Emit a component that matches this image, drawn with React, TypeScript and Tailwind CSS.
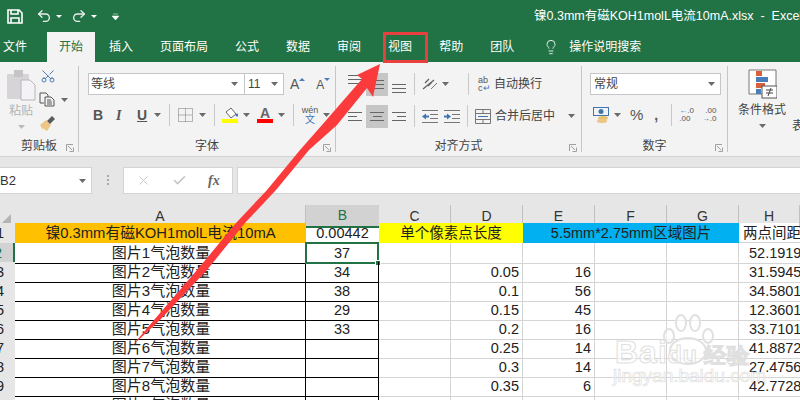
import React from 'react';
import { Lightbulb, Redo2, Scissors, Undo2, X, Check } from 'lucide-react';

const tabs = ['插入', '页面布局', '公式', '数据', '审阅', '视图', '帮助', '团队'];

const rows = [
  { n: 2, name: '图片1气泡数量', b: '37', d: '', e: '', h: '52.1919' },
  { n: 3, name: '图片2气泡数量', b: '34', d: '0.05', e: '16', h: '31.5945' },
  { n: 4, name: '图片3气泡数量', b: '38', d: '0.1', e: '56', h: '34.5801' },
  { n: 5, name: '图片4气泡数量', b: '29', d: '0.15', e: '45', h: '12.3601' },
  { n: 6, name: '图片5气泡数量', b: '33', d: '0.2', e: '16', h: '33.7101' },
  { n: 7, name: '图片6气泡数量', b: '', d: '0.25', e: '14', h: '41.8872' },
  { n: 8, name: '图片7气泡数量', b: '', d: '0.3', e: '14', h: '27.4756' },
  { n: 9, name: '图片8气泡数量', b: '', d: '0.35', e: '6', h: '42.7728' },
  { n: 10, name: '图片9气泡数量', b: '', d: '', e: '', h: '' },
];

const cjk = "font-['Liberation_Sans','Noto_Sans_CJK_SC',sans-serif]";
const gridCols = 'grid grid-cols-[15px_291px_73px_72px_72px_72px_72px_72px_61px]';

const Caret = ({ className = '' }: { className?: string }) => (
  <svg width="7" height="4" viewBox="0 0 7 4" className={className}>
    <path d="M0 0h7L3.5 4z" fill="#6a6a6a" />
  </svg>
);

const Sep = ({ className = '' }: { className?: string }) => (
  <div className={`w-px h-[22px] bg-[#c8c8c8] ${className}`} />
);

const Launcher = () => (
  <svg width="8" height="8" viewBox="0 0 8 8">
    <path d="M.5 7V.5H7M2 2l4 4M3.5 7.5h4v-4" fill="none" stroke="#8a8a8a" strokeWidth=".8" />
  </svg>
);

// 对齐图标: 三条横线
const Lines = ({ widths, align }: { widths: number[]; align: string }) => (
  <div className={`flex flex-col gap-[3px] w-[14px] ${align}`}>
    {widths.map((w, i) => (
      <div key={i} className="h-px bg-[#666]" style={{ width: w }} />
    ))}
  </div>
);

const Group = ({ w, label, children }: { w: string; label: string; children: React.ReactNode }) => (
  <div className={`${w} shrink-0 h-[86px] flex flex-col border-r border-[#c6c6c6] mt-[4px] relative`}>
    <div className="flex-1">{children}</div>
    <div className="h-[17px] flex items-center justify-center text-[12px] text-[#444] pt-[4px]">{label}</div>
    <div className="absolute right-[4px] bottom-[0px] flex">
      <Launcher />
    </div>
  </div>
);

const App = () => {
  return (
    <div className={`w-[800px] h-[400px] overflow-hidden relative bg-white ${cjk}`}>
      {/* Title bar */}
      <div className="h-[32px] bg-[#217346] flex items-center text-white overflow-hidden">
        <svg width="16" height="15" viewBox="0 0 16 15" className="ml-[7px] shrink-0">
          <path d="M1 1h11l3 3v10H1zM4 1v4h7V1M4 14V9h8v5" fill="none" stroke="#fff" strokeWidth="1.6" />
        </svg>
        <Undo2 size={16} strokeWidth={2} className="ml-[13px] shrink-0 text-[#e8efea]" />
        <svg width="6" height="3" viewBox="0 0 6 3" className="ml-[4px] shrink-0"><path d="M0 0h6L3 3z" fill="#fff" /></svg>
        <Redo2 size={16} strokeWidth={2} className="ml-[9px] shrink-0 text-[#e8efea]" />
        <svg width="6" height="3" viewBox="0 0 6 3" className="ml-[4px] shrink-0"><path d="M0 0h6L3 3z" fill="#fff" /></svg>
        <svg width="7" height="7" viewBox="0 0 7 7" className="ml-[15px] shrink-0"><path d="M1 1h5M0 3h7L3.5 7z" fill="#fff" stroke="#fff" strokeWidth=".5" /></svg>
        <div className="ml-[415px] shrink-0 text-[12.5px] whitespace-nowrap">镍0.3mm有磁KOH1molL电流10mA.xlsx&nbsp; -&nbsp; Excel</div>
      </div>

      {/* Tabs */}
      <div className="h-[30px] bg-[#217346] flex items-center gap-[27px] pl-[3px] text-white text-[12px]">
        <span>文件</span>
        <span className="h-full -ml-[7px] -mr-[13px] px-[12px] bg-[#f3f3f3] text-[#217346] flex items-center">开始</span>
        {tabs.map(t => (
          <span key={t}>{t}</span>
        ))}
        <span className="ml-[2px] flex items-center gap-[10px]">
          <Lightbulb size={16} strokeWidth={1.3} />
          操作说明搜索
        </span>
      </div>

      {/* Ribbon */}
      <div className="h-[95px] bg-[#f3f3f3] border-b border-[#d2d2d2] flex overflow-hidden">
        <Group w="w-[79px]" label="剪贴板">
          <div className="flex h-full">
            <div className="w-[36px] ml-[3px] flex flex-col items-center">
              <svg width="29" height="31" viewBox="0 0 29 31" className="mt-[4px]">
                <rect x="0" y="4" width="22" height="25" rx="1" fill="#d6d4d6" />
                <rect x="7" y="0" width="9" height="7" fill="#c6c4c6" />
                <path d="M14 10h9l5 5v15H14z" fill="#f4f2f6" stroke="#b8b6b8" />
              </svg>
              <span className="text-[12px] text-[#b4b4b4] leading-[14px] mt-[3px]">粘贴</span>
              <Caret className="mt-[7px] opacity-40" />
            </div>
            <div className="flex flex-col">
              <Scissors size={16} strokeWidth={1.4} className="text-[#3f74b5] mt-[2px] ml-[1px] -rotate-90" />
              <div className="flex items-center mt-[8px]">
                <svg width="16" height="15" viewBox="0 0 16 15">
                  <path d="M1 1h6l2 2v2M1 1v10h4M6 5h6l3 3v6H6zM8 8h4M8 10h5M8 12h5" fill="none" stroke="#555" />
                </svg>
                <Caret className="ml-[6px]" />
              </div>
              <svg width="17" height="17" viewBox="0 0 17 17" className="mt-[8px]">
                <path d="M1 10l6-5 5 5-4 6-2-1-1-2-1 2z" fill="#edc687" />
                <path d="M8 6l5-5 3 3-5 5z" fill="#5a5a5a" />
              </svg>
            </div>
          </div>
        </Group>

        <Group w="w-[257px]" label="字体">
          <div className="flex mt-[7px] ml-[9px] items-center">
            <div className="w-[157px] h-[22px] bg-white border border-[#c6c6c6] flex items-center justify-between pl-[2px] pr-[6px] text-[12px] text-[#444]">
              等线
              <Caret />
            </div>
            <div className="w-[39px] h-[22px] bg-white border border-[#c6c6c6] border-l-0 flex items-center justify-between pl-[3px] pr-[5px] text-[12px] text-[#444]">
              11
              <Caret />
            </div>
            <span className="ml-[6px] text-[14px] text-[#555]">A</span>
            <svg width="6" height="3" viewBox="0 0 6 3" className="mb-[10px]"><path d="M0 3h6L3 0z" fill="#4a7ebb" /></svg>
            <span className="ml-[11px] text-[12px] text-[#555] mt-[2px]">A</span>
            <svg width="6" height="3" viewBox="0 0 6 3" className="mb-[10px]"><path d="M0 0h6L3 3z" fill="#4a7ebb" /></svg>
          </div>
          <div className="flex items-center mt-[9px] ml-[14px] text-[#555] h-[22px]">
            <span className="w-[9px] text-[14px] font-bold font-['Liberation_Sans']">B</span>
            <span className="ml-[14px] w-[8px] text-[14px] italic font-['Liberation_Serif'] font-bold">I</span>
            <span className="ml-[13px] w-[10px] text-[14px] font-bold underline font-['Liberation_Sans']">U</span>
            <Caret className="ml-[7px]" />
            <Sep className="ml-[8px]" />
            <svg width="15" height="14" viewBox="0 0 15 14" className="ml-[8px]">
              <path d="M.5.5h14v13H.5zM7.5.5v13M.5 7h14" fill="none" stroke="#777" strokeDasharray="1 1" />
            </svg>
            <Caret className="ml-[6px]" />
            <Sep className="ml-[8px]" />
            <div className="ml-[7px] flex flex-col items-center w-[16px]">
              <svg width="15" height="12" viewBox="0 0 15 12">
                <path d="M3 5l5-4 5 6-5 4z" fill="#fff" stroke="#666" />
                <circle cx="14" cy="8" r="1.5" fill="#4a7ebb" />
              </svg>
              <div className="w-[16px] h-[4px] bg-[#ffff00]" />
            </div>
            <Caret className="ml-[5px]" />
            <div className="ml-[7px] flex flex-col items-center w-[16px]">
              <span className="text-[14px] leading-[12px] font-bold text-[#666] font-['Liberation_Sans']">A</span>
              <div className="w-[16px] h-[4px] bg-[#ff0000]" />
            </div>
            <Caret className="ml-[5px]" />
            <Sep className="ml-[8px]" />
            <div className="ml-[8px] w-[16px] flex flex-col items-center leading-[9px]">
              <span className="text-[9px] text-[#555]">wén</span>
              <span className="text-[10px] text-[#3f74b5]">文</span>
            </div>
            <Caret className="ml-[5px]" />
          </div>
        </Group>

        <Group w="w-[246px]" label="对齐方式">
          <div className="flex items-center mt-[6px] ml-[12px] h-[24px]">
            <Lines widths={[14, 14, 14]} align="self-start mt-[3px]" />
            <div className="ml-[4px] w-[22px] h-[23px] bg-[#c6c6c6] flex items-center justify-center">
              <Lines widths={[14, 14, 14]} align="" />
            </div>
            <div className="ml-[4px] self-end mb-[3px]">
              <Lines widths={[14, 14, 14]} align="" />
            </div>
            <Sep className="ml-[8px]" />
            <svg width="16" height="15" viewBox="0 0 16 15" className="ml-[7px]">
              <path d="M1 12L12 3M3 6l4-4M6 9l4-4" stroke="#666" strokeWidth="1.4" fill="none" />
              <path d="M9 12l6-6" stroke="#777" fill="none" />
            </svg>
            <Caret className="ml-[4px]" />
            <Sep className="ml-[19px]" />
            <span className="ml-[9px] w-[13px] text-[9px] leading-[8px] text-[#555]">ab<br />c<span className="text-[#3f74b5]">↵</span></span>
            <span className="ml-[3px] text-[12px] text-[#444]">自动换行</span>
          </div>
          <div className="flex items-center mt-[8px] ml-[12px] h-[24px]">
            <Lines widths={[14, 9, 14]} align="items-start" />
            <div className="ml-[4px] w-[22px] h-[23px] bg-[#c6c6c6] flex items-center justify-center">
              <Lines widths={[14, 9, 14]} align="items-center" />
            </div>
            <div className="ml-[4px]">
              <Lines widths={[14, 9, 14]} align="items-end" />
            </div>
            <Sep className="ml-[8px]" />
            <svg width="16" height="13" viewBox="0 0 16 13" className="ml-[7px]">
              <path d="M0 .5h16M8 4.5h8M8 8.5h8M0 12.5h16" stroke="#777" />
              <path d="M0 6.5l4-3v2h3v2H4v2z" fill="#3f74b5" />
            </svg>
            <svg width="16" height="13" viewBox="0 0 16 13" className="ml-[6px]">
              <path d="M0 .5h16M8 4.5h8M8 8.5h8M0 12.5h16" stroke="#777" />
              <path d="M7 6.5l-4-3v2H0v2h3v2z" fill="#3f74b5" />
            </svg>
            <Sep className="ml-[7px]" />
            <svg width="16" height="15" viewBox="0 0 16 15" className="ml-[7px]">
              <path d="M.5.5h15v14H.5zM.5 4.5h15M.5 10.5h15M8 .5v4M8 10.5v4" fill="none" stroke="#777" />
              <path d="M3 7.5h10" stroke="#3f74b5" />
            </svg>
            <span className="ml-[4px] text-[12px] text-[#444]">合并后居中</span>
            <Caret className="ml-[13px]" />
          </div>
        </Group>

        <Group w="w-[146px]" label="数字">
          <div className="mt-[7px] ml-[8px] w-[131px] h-[22px] bg-white border border-[#c6c6c6] flex items-center justify-between pl-[3px] pr-[5px] text-[12px] text-[#444]">
            常规
            <Caret />
          </div>
          <div className="flex items-center mt-[9px] ml-[11px] h-[22px]">
            <svg width="16" height="16" viewBox="0 0 16 16">
              <rect x=".5" y=".5" width="15" height="8" fill="none" stroke="#3f74b5" />
              <circle cx="8" cy="4.5" r="2.5" fill="#3f74b5" />
              <ellipse cx="10" cy="11" rx="5" ry="2" fill="#e8c26a" />
              <ellipse cx="9" cy="14" rx="5" ry="2" fill="#edc687" />
            </svg>
            <Caret className="ml-[5px]" />
            <span className="ml-[9px] text-[15px] text-[#555]">%</span>
            <span className="ml-[11px] text-[14px] font-bold text-[#555] w-[5px] leading-none">,</span>
            <Sep className="ml-[12px]" />
            <span className="ml-[7px] w-[15px] text-[8px] leading-[8px] text-[#555]"><span className="text-[#3f74b5]">←</span>.0<br />.00</span>
            <span className="ml-[7px] w-[15px] text-[8px] leading-[8px] text-[#555] text-right">.00<br /><span className="text-[#3f74b5]">→</span>.0</span>
          </div>
        </Group>

        <div className="flex-1 relative">
          <div className="flex flex-col items-center w-[68px]">
            <svg width="29" height="30" viewBox="0 0 29 30" className="mt-[7px]">
              <path d="M1 1h27v24H1z" fill="#fff" stroke="#777" />
              <rect x="8" y="2" width="6" height="5" fill="#d9603b" />
              <rect x="8" y="8" width="12" height="5" fill="#4a7ebb" />
              <rect x="8" y="14" width="9" height="5" fill="#d9603b" />
              <rect x="8" y="20" width="5" height="5" fill="#4a7ebb" />
              <rect x="14" y="17" width="15" height="12" fill="#fff" stroke="#555" />
              <path d="M18 21h7M18 24h7M23 19l-3 8" stroke="#444" fill="none" />
            </svg>
            <span className="text-[12px] text-[#444] leading-[14px] mt-[4px]">条件格式</span>
            <Caret className="mt-[7px]" />
          </div>
          <span className="absolute left-[64px] top-[55px] text-[12px] text-[#444]">表</span>
        </div>
      </div>

      {/* Formula bar */}
      <div className="h-[48px] bg-[#e6e6e6] flex pt-[10px] items-start">
        <div className="w-[92px] h-[27px] bg-white border border-[#d4d4d4] border-l-0 flex items-center justify-between pr-[5px] text-[13px] text-[#333]">
          B2
          <Caret />
        </div>
        <div className="ml-[15px] mt-[8px] flex flex-col gap-[2px]">
          <div className="w-[2px] h-[2px] bg-[#aaa]" />
          <div className="w-[2px] h-[2px] bg-[#aaa]" />
          <div className="w-[2px] h-[2px] bg-[#aaa]" />
        </div>
        <div className="ml-[14px] w-[110px] h-[27px] bg-white border border-[#d4d4d4] flex items-center pl-[12px]">
          <X size={15} strokeWidth={1.5} className="text-[#c4c4c4]" />
          <Check size={15} strokeWidth={2.5} className="ml-[21px] text-[#c4c4c4]" />
          <span className="ml-[21px] text-[14px] italic font-bold text-[#666] font-['Liberation_Serif']">fx</span>
        </div>
        <div className="ml-[4px] flex-1 h-[27px] bg-white border border-[#d4d4d4] border-r-0" />
      </div>

      {/* Sheet */}
      <div className={`${gridCols} h-[18px] bg-[#e6e6e6] text-[14px] text-[#333]`}>
        <div className="flex items-end pb-[3px]">
          <svg width="11" height="11" viewBox="0 0 11 11"><path d="M11 0v11H0z" fill="#b4b4b4" /></svg>
        </div>
        {['A', 'B', 'C', 'D', 'E', 'F', 'G', 'H'].map(c => (
          <div
            key={c}
            className={
              c === 'B'
                ? 'flex items-center justify-center bg-[#d2d2d2] text-[#217346] border-b-2 border-[#217346]'
                : 'flex items-center justify-center border-r border-[#c0c0c0]'
            }
          >
            {c}
          </div>
        ))}
      </div>

      <div className={`${gridCols} h-[20px] text-[14.5px] text-[#222] leading-[20px]`}>
        <div className="bg-[#e6e6e6] flex justify-end pr-[11px]">1</div>
        <div className="bg-[#ffc000] text-center text-[14.8px] whitespace-nowrap">镍0.3mm有磁KOH1molL电流10mA</div>
        <div className="text-center">0.00442</div>
        <div className="col-span-2 bg-[#ffff00] text-center">单个像素点长度</div>
        <div className="col-span-3 bg-[#00b0f0] text-center">5.5mm*2.75mm区域图片</div>
        <div className="pl-[4px] whitespace-nowrap overflow-hidden border-b border-[#d4d4d4]">两点间距离</div>
      </div>

      {rows.map(r => (
        <div key={r.n} className={`${gridCols} h-[19px] text-[14.5px] text-[#222] leading-[20px]`}>
          <div
            className={
              r.n === 2
                ? 'bg-[#d2d2d2] text-[#217346] flex justify-end pr-[11px] border-r-2 border-[#217346]'
                : 'bg-[#e6e6e6] flex justify-end pr-[11px] border-b border-[#c0c0c0]'
            }
          >
            {r.n}
          </div>
          <div className="text-center pl-[2px] text-[15px] border-b border-r border-black whitespace-nowrap">{r.name}</div>
          <div className="relative text-center border-b border-r border-black">
            {r.b}
            {r.n === 2 && (
              <>
                <div className="absolute -left-[1px] -top-[1px] -right-[1px] -bottom-[1px] border-2 border-[#217346]" />
                <div className="absolute -right-[3px] -bottom-[3px] w-[6px] h-[6px] bg-[#217346] border border-white" />
              </>
            )}
          </div>
          <div className="border-b border-r border-[#d4d4d4]" />
          <div className="text-right pr-[3px] border-b border-r border-[#d4d4d4]">{r.d}</div>
          <div className="text-right pr-[3px] border-b border-r border-[#d4d4d4]">{r.e}</div>
          <div className="border-b border-r border-[#d4d4d4]" />
          <div className="border-b border-r border-[#d4d4d4]" />
          <div className="pl-[10px] whitespace-nowrap overflow-hidden border-b border-[#d4d4d4]">{r.h}</div>
        </div>
      ))}

      {/* Baidu watermark */}
      <div className="absolute left-[613px] top-[313px] w-[150px] h-[72px] pointer-events-none">
        <svg width="56" height="52" viewBox="0 0 56 52" className="absolute left-[48px] top-[0px]">
          <g fill="#ffffff" fillOpacity=".6" stroke="#e0e0e0" strokeWidth="2">
            <ellipse cx="8" cy="23" rx="5" ry="7" />
            <ellipse cx="20" cy="10" rx="5" ry="8" />
            <ellipse cx="34" cy="10" rx="5" ry="8" />
            <ellipse cx="47" cy="23" rx="5" ry="7" />
            <ellipse cx="27" cy="38" rx="18" ry="13" />
          </g>
        </svg>
        <div className="absolute left-[2px] top-[23px] text-[32px] leading-[32px] font-bold font-['Liberation_Sans'] text-white/60 [-webkit-text-stroke:1px_#e0e0e0] whitespace-nowrap tracking-[1px]">
          Bai<span className="text-[23px]">du</span>
          <span className="ml-[6px] text-[22px]">经验</span>
        </div>
        <div className="absolute left-[0px] top-[54px] text-[19px] leading-[18px] font-['Liberation_Sans'] text-white/60 [-webkit-text-stroke:0.7px_#e0e0e0] whitespace-nowrap">
          jingyan.baidu.com
        </div>
      </div>

      {/* Red callout over the tab */}
      <div className="absolute left-[383px] top-[32px] w-[45px] h-[31px] border-[3px] border-[#e8403f]" />
      <svg width="800" height="400" viewBox="0 0 800 400" className="absolute left-0 top-0 pointer-events-none">
        <polygon points="380,64 357,75 362,79 322,125 300,150 267,190 236,223 197,270 154,320 132,346 160,320 207,270 245,223 276,190 309,150 337,125 367,88 373,97" fill="#fb3b3b" />
      </svg>
    </div>
  );
};

export default App;
